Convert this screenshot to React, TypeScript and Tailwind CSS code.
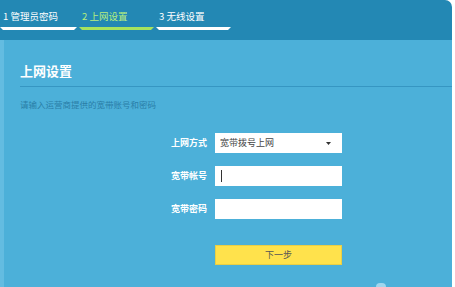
import React from "react";

const font = { fontFamily: '"Noto Sans CJK SC", "Noto Sans", sans-serif' };

function Step({ label, active, width }: { label: string; active?: boolean; width: string }) {
  return (
    <div className={`flex flex-col ${width}`}>
      <div className={`h-[16px] text-[9.5px] leading-[16px] pl-[3px] whitespace-nowrap ${active ? "text-[#b6ee7e]" : "text-white"}`}>
        {label}
      </div>
      <div
        className={`mt-[3px] h-[3px] ${active ? "bg-[#a6e35f]" : "bg-white"} [clip-path:polygon(0_0,100%_0,calc(100%-3px)_100%,3px_100%)]`}
      />
    </div>
  );
}

function Row({ label, children }: { label: string; children: React.ReactNode }) {
  return (
    <div className="flex items-center h-[20px]">
      <div className="w-[203px] text-right text-[9px] font-bold text-white">{label}</div>
      <div className="ml-[8px] w-[127px] h-[20px]">{children}</div>
    </div>
  );
}

export default function App() {
  return (
    <div className="w-[455px] h-[287px] bg-white relative overflow-hidden" style={font}>
      <div className="w-[452px] h-full flex flex-col rounded-tr-[7px] overflow-hidden">
        <div className="h-[40px] bg-[#2388b4] flex items-start pt-[8px] gap-[2px]">
          <Step label="1 管理员密码" width="w-[77px]" />
          <Step label="2 上网设置" active width="w-[75px]" />
          <Step label="3 无线设置" width="w-[75px]" />
        </div>
        <div className="flex-1 flex">
          <div className="w-[4px] bg-[#63bce1]" />
          <div className="flex-1 bg-[#4cb0d9] pl-[16px] flex flex-col">
            <div className="mt-[22px] text-[13px] font-bold text-white leading-[18px] h-[18px]">上网设置</div>
            <div className="mt-[6px] h-px bg-[#3696c2]" />
            <div className="mt-[11px] text-[8.5px] text-[#2a7ea8] leading-[12px]">请输入运营商提供的宽带账号和密码</div>
            <div className="mt-[23px] -ml-[16px] flex flex-col gap-[13px]">
              <Row label="上网方式">
                <div className="w-full h-full bg-white flex items-center justify-between pl-[5px] pr-[11px] text-[9px] text-[#444]">
                  <span>宽带拨号上网</span>
                  <svg width="5" height="3" viewBox="0 0 5 3"><path d="M0 0h5L2.5 3z" fill="#333" /></svg>
                </div>
              </Row>
              <Row label="宽带帐号">
                <div className="w-full h-full bg-white flex items-center pl-[6px]">
                  <div className="w-px h-[12px] bg-[#333]" />
                </div>
              </Row>
              <Row label="宽带密码">
                <div className="w-full h-full bg-white" />
              </Row>
            </div>
            <div className="mt-[26px] ml-[195px] w-[127px] h-[20px] bg-[#ffe24c] border border-[#e9cf46] flex items-center justify-center text-[9px] text-[#555]">
              下一步
            </div>
          </div>
        </div>
      </div>
      <div className="absolute left-[376px] top-[283px] w-[10px] h-[8px] rounded-full bg-[#9fd6ee]" />
    </div>
  );
}
